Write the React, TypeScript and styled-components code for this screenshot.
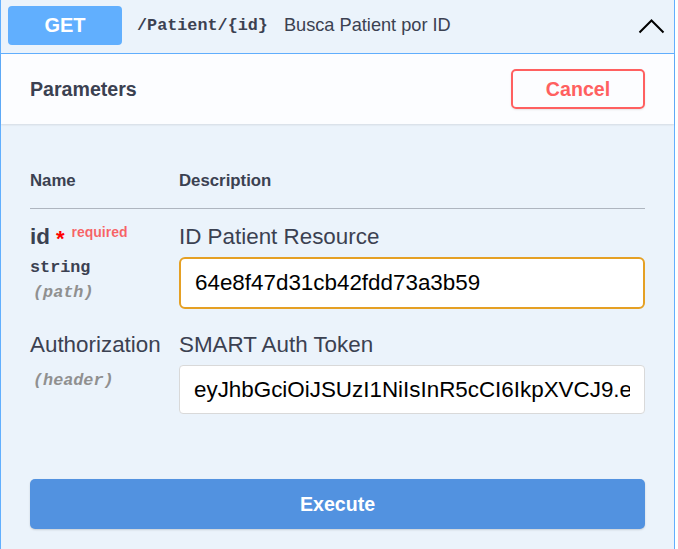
import React from 'react'
import styled, { createGlobalStyle } from 'styled-components'

const GlobalStyle = createGlobalStyle`
  body {
    margin: 0;
    background: #ffffff;
    font-family: "Liberation Sans", Arial, sans-serif;
    color: #3b4151;
  }
  * { box-sizing: border-box; }
`

const OpBlock = styled.div`
  width: 675px;
  min-height: 570px;
  border: 1px solid #61affe;
  border-top: none;
  background: #ebf3fb;
`

const Summary = styled.div`
  display: flex;
  align-items: center;
  height: 54px;
  padding: 0 9px 2px 7px;
  border-bottom: 1px solid #61affe;
`

const MethodBadge = styled.span`
  display: flex;
  align-items: center;
  justify-content: center;
  width: 114px;
  height: 39px;
  border-radius: 4px;
  background: #61affe;
  color: #ffffff;
  font-size: 20px;
  font-weight: 700;
`

const Path = styled.span`
  margin-left: 15px;
  font-family: "Liberation Mono", "Courier New", monospace;
  font-weight: 700;
  font-size: 16.8px;
  color: #3b4151;
`

const SummaryText = styled.span`
  flex: 1;
  margin-left: 16px;
  font-size: 18.2px;
  color: #3b4151;
`

const Chevron = styled.svg`
  width: 27px;
  height: 16px;
`

const SectionHeader = styled.div`
  display: flex;
  align-items: center;
  justify-content: space-between;
  height: 70px;
  padding: 0 29px 0 29px;
  background: #fcfdff;
  box-shadow: 0 1px 2px rgba(0, 0, 0, 0.1);
`

const SectionTitle = styled.h4`
  margin: 0;
  font-size: 19.6px;
  font-weight: 700;
`

const CancelButton = styled.button`
  width: 134px;
  height: 40px;
  border: 2px solid #ff6060;
  border-radius: 5px;
  background: transparent;
  color: #ff6060;
  font-family: "Liberation Sans", Arial, sans-serif;
  font-size: 19.6px;
  font-weight: 700;
  box-shadow: 0 1px 2px rgba(0, 0, 0, 0.1);
`

const Body = styled.div`
  padding: 0 29px;
`

const Row = styled.div<{ head?: boolean }>`
  display: grid;
  grid-template-columns: 149px 1fr;
  padding: ${({ head }) => (head ? '47px 0 17px' : '15px 0 8px')};
  border-bottom: ${({ head }) => (head ? '1px solid rgba(59, 65, 81, 0.35)' : 'none')};
`

const HeadCell = styled.div`
  font-size: 16.8px;
  font-weight: 700;
  line-height: 20px;
`

const ParamName = styled.div<{ required?: boolean }>`
  font-size: 22.4px;
  line-height: 26px;
  font-weight: ${({ required }) => (required ? 700 : 400)};
  white-space: nowrap;
`

const Star = styled.span`
  position: relative;
  top: 2px;
  margin-left: 6px;
  color: #ff0000;
  font-size: 22px;
`

const RequiredTag = styled.span`
  position: relative;
  top: -7px;
  padding-left: 7px;
  font-size: 14px;
  font-weight: 700;
  color: rgba(255, 0, 0, 0.6);
`

const ParamType = styled.div`
  padding: 7px 0 6px;
  font-family: "Liberation Mono", "Courier New", monospace;
  font-weight: 700;
  font-size: 16.8px;
  line-height: 18px;
`

const ParamIn = styled.div`
  padding-left: 3px;
  font-family: "Liberation Mono", "Courier New", monospace;
  font-style: italic;
  font-weight: 700;
  font-size: 16.8px;
  line-height: 20px;
  color: #909090;
`

const DescText = styled.div`
  font-size: 22.4px;
  line-height: 26px;
  margin-bottom: 7px;
`

const TextInput = styled.input<{ focused?: boolean }>`
  display: block;
  width: 100%;
  height: ${({ focused }) => (focused ? '52px' : '49px')};
  padding: 0 14px;
  border: ${({ focused }) => (focused ? '2px solid #e5a024' : '1px solid #d9d9d9')};
  border-radius: ${({ focused }) => (focused ? '6px' : '4px')};
  background: #ffffff;
  color: #000000;
  font-family: "Liberation Sans", Arial, sans-serif;
  font-size: 22.4px;
  outline: none;
`

const ExecuteButton = styled.button`
  display: block;
  width: 100%;
  height: 50px;
  margin-top: 57px;
  border: none;
  border-radius: 5px;
  background: #5292e0;
  color: #ffffff;
  font-family: "Liberation Sans", Arial, sans-serif;
  font-size: 19.6px;
  font-weight: 700;
  box-shadow: 0 1px 2px rgba(0, 0, 0, 0.15);
`

interface Param {
  name: string
  type?: string
  location: string
  required?: boolean
  description: string
  value: string
  focused?: boolean
}

const params: Param[] = [
  {
    name: 'id',
    type: 'string',
    location: 'path',
    required: true,
    description: 'ID Patient Resource',
    value: '64e8f47d31cb42fdd73a3b59',
    focused: true,
  },
  {
    name: 'Authorization',
    location: 'header',
    description: 'SMART Auth Token',
    value: 'eyJhbGciOiJSUzI1NiIsInR5cCI6IkpXVCJ9.eyJzdWIiOiIxMjM0NTY3ODkwIn0',
  },
]

export default function App() {
  return (
    <>
      <GlobalStyle />
      <OpBlock>
        <Summary>
          <MethodBadge>GET</MethodBadge>
          <Path>/Patient/{'{id}'}</Path>
          <SummaryText>Busca Patient por ID</SummaryText>
          <Chevron viewBox="0 0 27 16">
            <polyline points="1.5,14.5 13.5,2.5 25.5,14.5" fill="none" stroke="#000" strokeWidth="2" />
          </Chevron>
        </Summary>
        <SectionHeader>
          <SectionTitle>Parameters</SectionTitle>
          <CancelButton>Cancel</CancelButton>
        </SectionHeader>
        <Body>
          <Row head>
            <HeadCell>Name</HeadCell>
            <HeadCell>Description</HeadCell>
          </Row>
          {params.map((p) => (
            <Row key={p.name}>
              <div>
                <ParamName required={p.required}>
                  {p.name}
                  {p.required && (
                    <>
                      <Star>*</Star>
                      <RequiredTag>required</RequiredTag>
                    </>
                  )}
                </ParamName>
                <ParamType>{p.type}</ParamType>
                <ParamIn>({p.location})</ParamIn>
              </div>
              <div>
                <DescText>{p.description}</DescText>
                <TextInput focused={p.focused} defaultValue={p.value} />
              </div>
            </Row>
          ))}
          <ExecuteButton>Execute</ExecuteButton>
        </Body>
      </OpBlock>
    </>
  )
}
